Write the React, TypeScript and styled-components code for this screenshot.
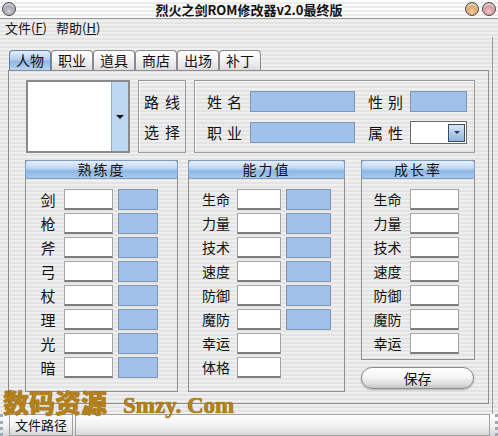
import React from "react";
import styled, { createGlobalStyle } from "styled-components";

const GlobalStyle = createGlobalStyle`
  html, body { margin: 0; padding: 0; }
  body {
    width: 498px; height: 436px; overflow: hidden;
    font-family: "Noto Sans CJK SC", "Noto Sans", sans-serif;
    color: #111;
  }
  * { box-sizing: border-box; }
`;

const stripes = `repeating-linear-gradient(to bottom, #efefef 0px, #efefef 2px, #e3e3e3 2px, #e3e3e3 4px)`;

const Window = styled.div`
  position: relative;
  width: 498px;
  height: 436px;
  display: flex;
  flex-direction: column;
  background: ${stripes};
  overflow: hidden;
`;

const TitleBar = styled.div`
  position: relative;
  height: 19px;
  flex: none;
  display: flex;
  align-items: center;
  justify-content: space-between;
  padding: 0 2px;
  background: repeating-linear-gradient(to bottom, #fbfbfb 0px, #fbfbfb 2px, #ececec 2px, #ececec 4px);
  border-bottom: 1px solid #9a9a9a;
`;

const Title = styled.div`
  position: absolute;
  left: 0;
  right: 0;
  text-align: center;
  font-size: 13px;
  font-weight: 700;
  line-height: 19px;
  pointer-events: none;
`;

const Lights = styled.div`
  display: flex;
  gap: 3px;
`;

const Light = styled.div<{ $c1: string; $c2: string }>`
  width: 14px;
  height: 14px;
  border-radius: 50%;
  border: 1px solid #4a4a4a;
  background: radial-gradient(circle at 50% 70%, ${(p) => p.$c1} 0%, ${(p) => p.$c2} 75%);
  box-shadow: inset 0 2px 2px rgba(255, 255, 255, 0.7);
`;

const MenuBar = styled.div`
  height: 18px;
  flex: none;
  display: flex;
  align-items: center;
  gap: 9px;
  padding-left: 5px;
  font-size: 13px;
`;

const MenuItem = styled.span`
  line-height: 18px;
  u { text-decoration: underline; }
`;

const Main = styled.div`
  flex: 1;
  display: flex;
  flex-direction: column;
  padding: 13px 0 0 8px;
  border-right: 1px solid #9a9a9a;
  margin-right: 5px;
`;

const Tabs = styled.div`
  display: flex;
  height: 20px;
  flex: none;
  margin-left: 1px;
`;

const Tab = styled.div<{ $active?: boolean }>`
  height: 20px;
  padding: 0 6px;
  font-size: 14px;
  line-height: 19px;
  border: 1px solid ${(p) => (p.$active ? "#5f7fa6" : "#8a8a8a")};
  border-bottom: none;
  border-radius: 4px 4px 0 0;
  background: ${(p) =>
    p.$active
      ? "linear-gradient(#e2eefa 0%, #b3d0f0 45%, #8fb8e4 55%, #b9d4f2 100%)"
      : "linear-gradient(#ffffff 0%, #f2f2f2 50%, #dcdcdc 100%)"};
`;

const Panel = styled.div`
  width: 481px;
  height: 334px;
  flex: none;
  border: 1px solid #8c8c8c;
  padding: 9px 0 0 16px;
  display: flex;
  flex-direction: column;
  gap: 7px;
`;

const TopRow = styled.div`
  display: flex;
  height: 73px;
  flex: none;
  margin-left: 1px;
  gap: 8px;
`;

const Combo = styled.div`
  width: 104px;
  height: 73px;
  display: flex;
  border: 2px solid #8a8a8a;
  background: #fff;
`;

const ComboText = styled.div`
  flex: 1;
`;

const ComboButton = styled.div`
  width: 17px;
  background: #bcd7ef;
  border-left: 1px solid #9ab;
  display: flex;
  align-items: center;
  justify-content: center;
`;

const Arrow = styled.div`
  width: 0;
  height: 0;
  border-left: 4px solid transparent;
  border-right: 4px solid transparent;
  border-top: 4px solid #111;
`;

const RouteBox = styled.div`
  width: 48px;
  border: 1px solid #9a9a9a;
  box-shadow: inset 1px 1px 0 #fafafa;
  display: flex;
  flex-direction: column;
  justify-content: space-around;
  align-items: center;
  padding: 5px 0 5px 6px;
  font-size: 15px;
  letter-spacing: 6px;
  white-space: nowrap;
`;

const InfoBox = styled.div`
  width: 281px;
  border: 1px solid #9a9a9a;
  box-shadow: inset 1px 1px 0 #fafafa;
  display: grid;
  grid-template-columns: 43px 105px 13px 42px 57px;
  grid-auto-rows: 21px;
  row-gap: 10px;
  padding: 10px 0 0 12px;
  align-items: center;
`;

const InfoLabel = styled.div`
  font-size: 15px;
  letter-spacing: 5px;
  white-space: nowrap;
`;

const Spacer = styled.div``;

const BlueField = styled.div`
  height: 21px;
  background: #9fc1ea;
  border: 1px solid #8096b0;
`;

const WhiteField = styled.div`
  height: 21px;
  background: #fff;
  border: 1px solid #a4a4a4;
  border-bottom: 2px solid #7d7d7d;
`;

const Select = styled.div`
  height: 23px;
  background: #fff;
  border: 1px solid #6a6a6a;
  display: flex;
  justify-content: flex-end;
  align-items: center;
  padding-right: 1px;
`;

const SelectButton = styled.div`
  width: 17px;
  height: 18px;
  border: 1px solid #3c4c60;
  background: linear-gradient(#d8e8f8, #8fb3de);
  display: flex;
  align-items: center;
  justify-content: center;
`;

const SmallArrow = styled.div`
  width: 0;
  height: 0;
  border-left: 3px solid transparent;
  border-right: 3px solid transparent;
  border-top: 3px solid #2a3a50;
`;

const Sections = styled.div`
  display: flex;
  align-items: flex-start;
  flex: none;
`;

const Frame = styled.div<{ $w: number; $h: number; $ml: number }>`
  width: ${(p) => p.$w}px;
  height: ${(p) => p.$h}px;
  flex: none;
  margin-left: ${(p) => p.$ml}px;
  border: 1px solid #8f8f8f;
  display: flex;
  flex-direction: column;
`;

const Header = styled.div`
  height: 19px;
  flex: none;
  margin: -1px -1px 0 -1px;
  border: 1px solid #7b9cc4;
  border-radius: 3px;
  background: linear-gradient(#e6f0fb 0%, #c2d9f2 40%, #8fb7e3 60%, #abcaee 100%);
  text-align: center;
  font-size: 14px;
  line-height: 17px;
  letter-spacing: 2px;
`;

const Rows = styled.div<{ $pl: number }>`
  display: flex;
  flex-direction: column;
  gap: 3px;
  padding: 10px 0 0 ${(p) => p.$pl}px;
`;

const Row = styled.div<{ $cols: string; $gap: number }>`
  display: grid;
  grid-template-columns: ${(p) => p.$cols};
  column-gap: ${(p) => p.$gap}px;
  height: 21px;
  align-items: center;
`;

const Label = styled.div<{ $size: number; $shift?: number }>`
  font-size: ${(p) => p.$size}px;
  text-align: center;
  line-height: 21px;
  padding-left: ${(p) => p.$shift ?? 0}px;
  white-space: nowrap;
`;

const Column = styled.div`
  display: flex;
  flex-direction: column;
  gap: 7px;
  margin-left: 16px;
`;

const SaveButton = styled.div`
  width: 113px;
  height: 22px;
  border-radius: 11px;
  border: 1px solid #8a8a8a;
  background: linear-gradient(#ffffff 0%, #f6f6f6 45%, #dcdcdc 80%, #c4c4c4 100%);
  box-shadow: 0 1px 2px rgba(0, 0, 0, 0.25);
  text-align: center;
  font-size: 14px;
  line-height: 20px;
`;

const StatusBar = styled.div`
  height: 22px;
  flex: none;
  display: flex;
  gap: 2px;
  padding: 0 5px 0 6px;
  background: linear-gradient(#ffffff 0%, #f2f2f2 50%, #d6d6d6 100%);
  border-left: 3px dotted #9ab;
  border-right: 3px dotted #9ab;
`;

const StatusCell = styled.div<{ $grow?: boolean }>`
  ${(p) => (p.$grow ? "flex: 1;" : "width: 64px;")}
  border: 1px solid #a0a0a0;
  font-size: 13px;
  line-height: 20px;
  text-align: center;
`;

const Watermark = styled.div`
  position: absolute;
  left: 3px;
  top: 389px;
  display: flex;
  align-items: baseline;
  color: #b5801b;
  text-shadow: 0 0 1px #6e4a00;
  pointer-events: none;
  white-space: nowrap;
  line-height: 25px;
`;

const WmCn = styled.span`
  font-family: "Noto Sans CJK SC", serif;
  font-size: 26px;
  font-weight: 900;
  line-height: 25px;
`;

const WmEn = styled.span`
  font-family: "Liberation Serif", serif;
  font-size: 23px;
  font-weight: 700;
  line-height: 23px;
  margin-left: 16px;
`;

const skills = ["剑", "枪", "斧", "弓", "杖", "理", "光", "暗"];
const abilities = ["生命", "力量", "技术", "速度", "防御", "魔防", "幸运", "体格"];
const growth = ["生命", "力量", "技术", "速度", "防御", "魔防", "幸运"];

export default function App() {
  return (
    <Window>
      <GlobalStyle />
      <TitleBar>
        <Light $c1="#d6d2dc" $c2="#8a8690" />
        <Title>烈火之剑ROM修改器v2.0最终版</Title>
        <Lights>
          <Light $c1="#f6d0a0" $c2="#c98a48" />
          <Light $c1="#f4c8cc" $c2="#c07c84" />
        </Lights>
      </TitleBar>
      <MenuBar>
        <MenuItem>文件(<u>F</u>)</MenuItem>
        <MenuItem>帮助(<u>H</u>)</MenuItem>
      </MenuBar>
      <Main>
        <Tabs>
          {["人物", "职业", "道具", "商店", "出场", "补丁"].map((t, i) => (
            <Tab key={t} $active={i === 0}>
              {t}
            </Tab>
          ))}
        </Tabs>
        <Panel>
          <TopRow>
            <Combo>
              <ComboText />
              <ComboButton>
                <Arrow />
              </ComboButton>
            </Combo>
            <RouteBox>
              <span>路线</span>
              <span>选择</span>
            </RouteBox>
            <InfoBox>
              <InfoLabel>姓名</InfoLabel>
              <BlueField />
              <Spacer />
              <InfoLabel>性别</InfoLabel>
              <BlueField />
              <InfoLabel>职业</InfoLabel>
              <BlueField />
              <Spacer />
              <InfoLabel>属性</InfoLabel>
              <Select>
                <SelectButton>
                  <SmallArrow />
                </SelectButton>
              </Select>
            </InfoBox>
          </TopRow>
          <Sections>
            <Frame $w={153} $h={232} $ml={0}>
              <Header>熟练度</Header>
              <Rows $pl={7}>
                {skills.map((s) => (
                  <Row key={s} $cols="26px 49px 40px" $gap={5}>
                    <Label $size={15} $shift={4}>{s}</Label>
                    <WhiteField />
                    <BlueField />
                  </Row>
                ))}
              </Rows>
            </Frame>
            <Frame $w={157} $h={232} $ml={10}>
              <Header>能力值</Header>
              <Rows $pl={11}>
                {abilities.map((s, i) => (
                  <Row key={s} $cols="32px 44px 45px" $gap={5}>
                    <Label $size={14}>{s}</Label>
                    <WhiteField />
                    {i < 6 ? <BlueField /> : <Spacer />}
                  </Row>
                ))}
              </Rows>
            </Frame>
            <Column>
              <Frame $w={114} $h={200} $ml={0}>
                <Header>成长率</Header>
                <Rows $pl={9}>
                  {growth.map((s) => (
                    <Row key={s} $cols="33px 49px" $gap={6}>
                      <Label $size={14}>{s}</Label>
                      <WhiteField />
                    </Row>
                  ))}
                </Rows>
              </Frame>
              <SaveButton>保存</SaveButton>
            </Column>
          </Sections>
        </Panel>
      </Main>
      <StatusBar>
        <StatusCell>文件路径</StatusCell>
        <StatusCell $grow />
      </StatusBar>
      <Watermark>
        <WmCn>数码资源</WmCn>
        <WmEn>Smzy. Com</WmEn>
      </Watermark>
    </Window>
  );
}
